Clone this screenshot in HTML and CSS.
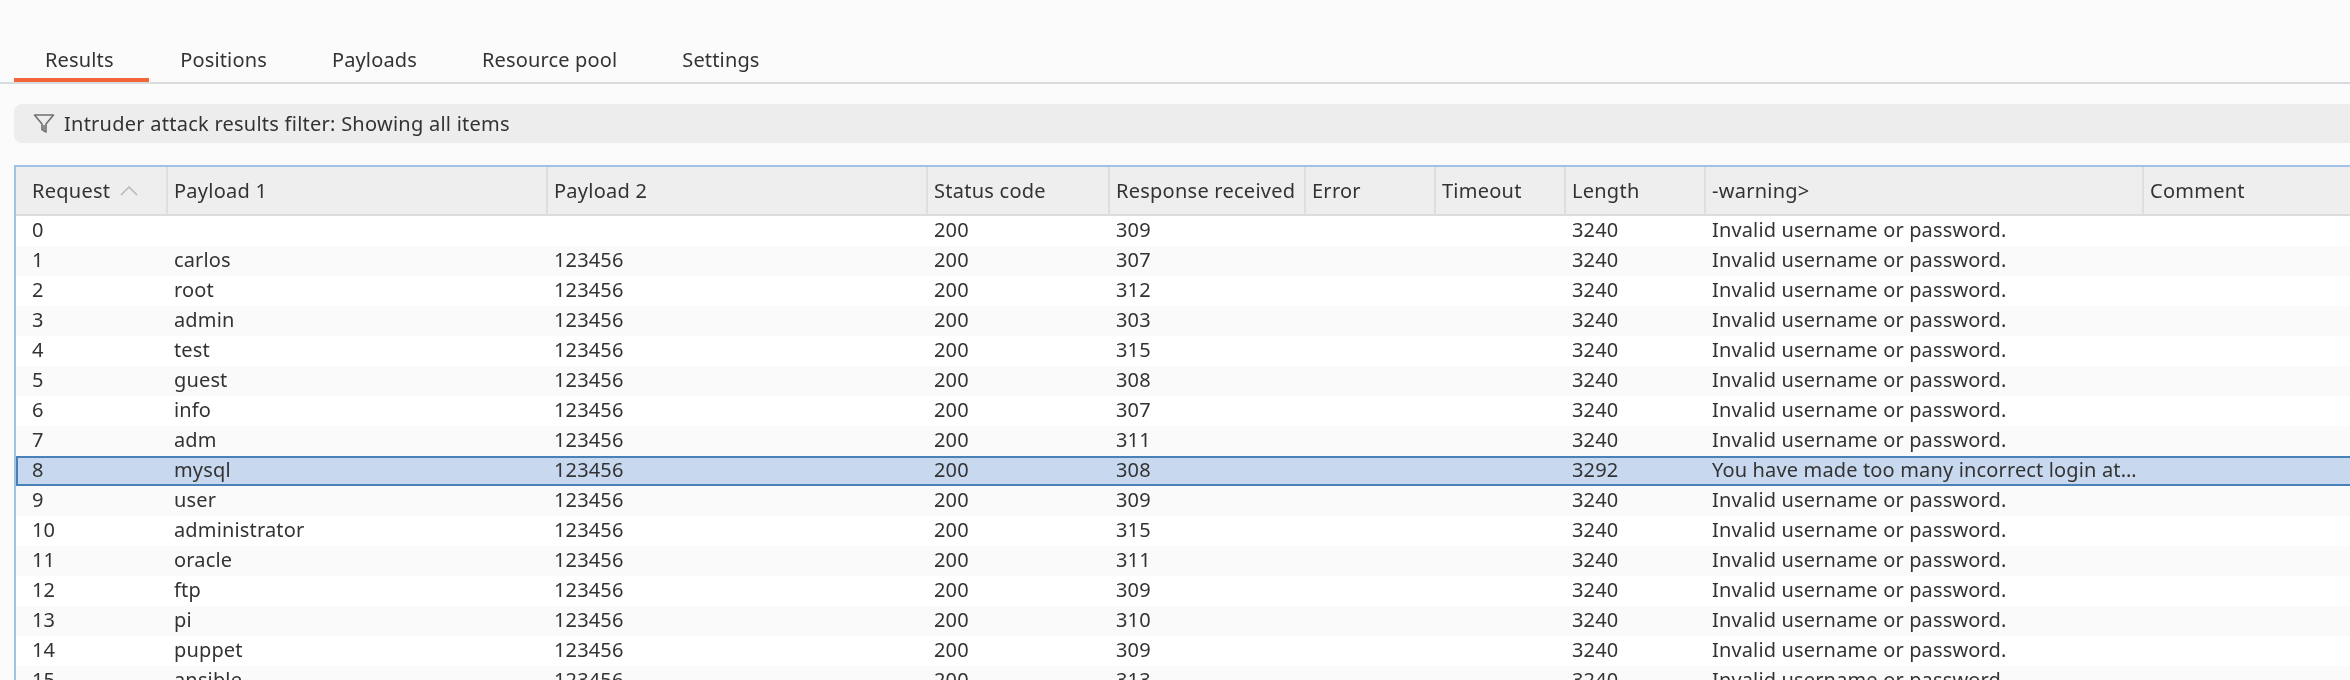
FILE: index.html
```html
<!DOCTYPE html>
<html lang="en">
<head>
<meta charset="utf-8">
<title>Intruder attack results</title>
<link rel="stylesheet" href="styles.css">
</head>
<body>
<nav class="tabs">
  <a class="tab active">Results</a>
  <a class="tab">Positions</a>
  <a class="tab">Payloads</a>
  <a class="tab">Resource pool</a>
  <a class="tab">Settings</a>
</nav>
<div class="filter">
  <svg class="filter-icon" width="22" height="22" viewBox="0 0 22 22" aria-hidden="true"><path d="M1.5 2h19l-7.5 9v8l-4-2.5V11z" fill="none" stroke="#6f6f6f" stroke-width="1.6" stroke-linejoin="round"/><path d="M9.5 12h3v6l-3-1.8z" fill="#8a8a8a"/></svg>
  <span>Intruder attack results filter: Showing all items</span>
</div>
<div class="table-wrap">
<table class="results">
  <colgroup>
    <col class="c-req"><col class="c-p1"><col class="c-p2"><col class="c-status"><col class="c-resp"><col class="c-err"><col class="c-time"><col class="c-len"><col class="c-warn"><col class="c-comment">
  </colgroup>
  <thead>
    <tr>
      <th><span class="sort">Request<svg class="caret" width="18" height="11" viewBox="0 0 18 11" aria-hidden="true"><path d="M1 10L9 2l8 8" fill="none" stroke="#b8b8b8" stroke-width="1.5"/></svg></span></th>
      <th>Payload 1</th><th>Payload 2</th><th>Status code</th><th>Response received</th><th>Error</th><th>Timeout</th><th>Length</th><th>-warning&gt;</th><th>Comment</th>
    </tr>
  </thead>
  <tbody>
    <tr><td>0</td><td></td><td></td><td>200</td><td>309</td><td></td><td></td><td>3240</td><td>Invalid username or password.</td><td></td></tr>
    <tr><td>1</td><td>carlos</td><td>123456</td><td>200</td><td>307</td><td></td><td></td><td>3240</td><td>Invalid username or password.</td><td></td></tr>
    <tr><td>2</td><td>root</td><td>123456</td><td>200</td><td>312</td><td></td><td></td><td>3240</td><td>Invalid username or password.</td><td></td></tr>
    <tr><td>3</td><td>admin</td><td>123456</td><td>200</td><td>303</td><td></td><td></td><td>3240</td><td>Invalid username or password.</td><td></td></tr>
    <tr><td>4</td><td>test</td><td>123456</td><td>200</td><td>315</td><td></td><td></td><td>3240</td><td>Invalid username or password.</td><td></td></tr>
    <tr><td>5</td><td>guest</td><td>123456</td><td>200</td><td>308</td><td></td><td></td><td>3240</td><td>Invalid username or password.</td><td></td></tr>
    <tr><td>6</td><td>info</td><td>123456</td><td>200</td><td>307</td><td></td><td></td><td>3240</td><td>Invalid username or password.</td><td></td></tr>
    <tr><td>7</td><td>adm</td><td>123456</td><td>200</td><td>311</td><td></td><td></td><td>3240</td><td>Invalid username or password.</td><td></td></tr>
    <tr class="selected"><td>8</td><td>mysql</td><td>123456</td><td>200</td><td>308</td><td></td><td></td><td>3292</td><td>You have made too many incorrect login at…</td><td></td></tr>
    <tr><td>9</td><td>user</td><td>123456</td><td>200</td><td>309</td><td></td><td></td><td>3240</td><td>Invalid username or password.</td><td></td></tr>
    <tr><td>10</td><td>administrator</td><td>123456</td><td>200</td><td>315</td><td></td><td></td><td>3240</td><td>Invalid username or password.</td><td></td></tr>
    <tr><td>11</td><td>oracle</td><td>123456</td><td>200</td><td>311</td><td></td><td></td><td>3240</td><td>Invalid username or password.</td><td></td></tr>
    <tr><td>12</td><td>ftp</td><td>123456</td><td>200</td><td>309</td><td></td><td></td><td>3240</td><td>Invalid username or password.</td><td></td></tr>
    <tr><td>13</td><td>pi</td><td>123456</td><td>200</td><td>310</td><td></td><td></td><td>3240</td><td>Invalid username or password.</td><td></td></tr>
    <tr><td>14</td><td>puppet</td><td>123456</td><td>200</td><td>309</td><td></td><td></td><td>3240</td><td>Invalid username or password.</td><td></td></tr>
    <tr><td>15</td><td>ansible</td><td>123456</td><td>200</td><td>313</td><td></td><td></td><td>3240</td><td>Invalid username or password.</td><td></td></tr>
  </tbody>
</table>
</div>
</body>
</html>
```
FILE: styles.css
```css
* { box-sizing: border-box; }
html { background: #fbfbfb; }
html, body { margin: 0; height: 680px; overflow: hidden; }
body {
  background: #fbfbfb;
  color: #333333;
  font-family: "Noto Sans", "Open Sans", sans-serif;
  font-size: 20px;
  padding: 39px 0 0 14px;
  filter: blur(0.4px);
}
.tabs {
  display: flex;
  height: 45px;
  margin-left: -14px;
  padding-left: 14px;
  border-bottom: 2px solid #d8dcdc;
}
.tab {
  height: 43px;
  padding: 0 34px 0 31px;
  line-height: 42px;
  letter-spacing: 0.15px;
}
.tab.active {
  padding-right: 35.5px;
  border-bottom: 4px solid #f2653a;
}
.filter {
  display: flex;
  align-items: center;
  gap: 9px;
  height: 39px;
  margin-top: 20px;
  padding-left: 19px;
  background: #ededed;
  border-radius: 8px 0 0 8px;
  letter-spacing: 0.25px;
}
.filter-icon { flex: none; }
.table-wrap {
  margin-top: 22px;
  width: 2340px;
  border-top: 2px solid #9fc2e6;
  border-left: 2px solid #9fc2e6;
}
.results {
  table-layout: fixed;
  border-collapse: separate;
  border-spacing: 0;
  width: 2334px;
}
.c-req { width: 152px; }
.c-p1 { width: 380px; }
.c-p2 { width: 380px; }
.c-status { width: 182px; }
.c-resp { width: 196px; }
.c-err { width: 130px; }
.c-time { width: 130px; }
.c-len { width: 140px; }
.c-warn { width: 438px; }
.c-comment { width: 206px; }
.results th {
  height: 49px;
  padding: 0 0 0 6px;
  background: #eeeeee;
  border-right: 2px solid #dfdfdf;
  border-bottom: 2px solid #dcdcdc;
  font-weight: 400;
  text-align: left;
  white-space: nowrap;
  letter-spacing: 0.25px;
}
.results th:first-child { padding-left: 16px; }
.results th:last-child { border-right: 0; }
.results td {
  height: 30px;
  padding: 0 0 2px 6px;
  white-space: nowrap;
  overflow: hidden;
  line-height: 26px;
  letter-spacing: 0.15px;
}
.results td:first-child { padding-left: 16px; }
.results tbody tr { background: #ffffff; }
.results tbody tr:nth-child(even) { background: #fafafa; }
.sort { display: inline-flex; align-items: center; gap: 10px; }
.results tbody tr.selected { background: #c7d8ef; }
.results .selected td {
  border-top: 2px solid #4a80b8;
  border-bottom: 2px solid #4a80b8;
  line-height: 24px;
}
.results .selected td:first-child { border-left: 2px solid #4a80b8; padding-left: 14px; }
```
